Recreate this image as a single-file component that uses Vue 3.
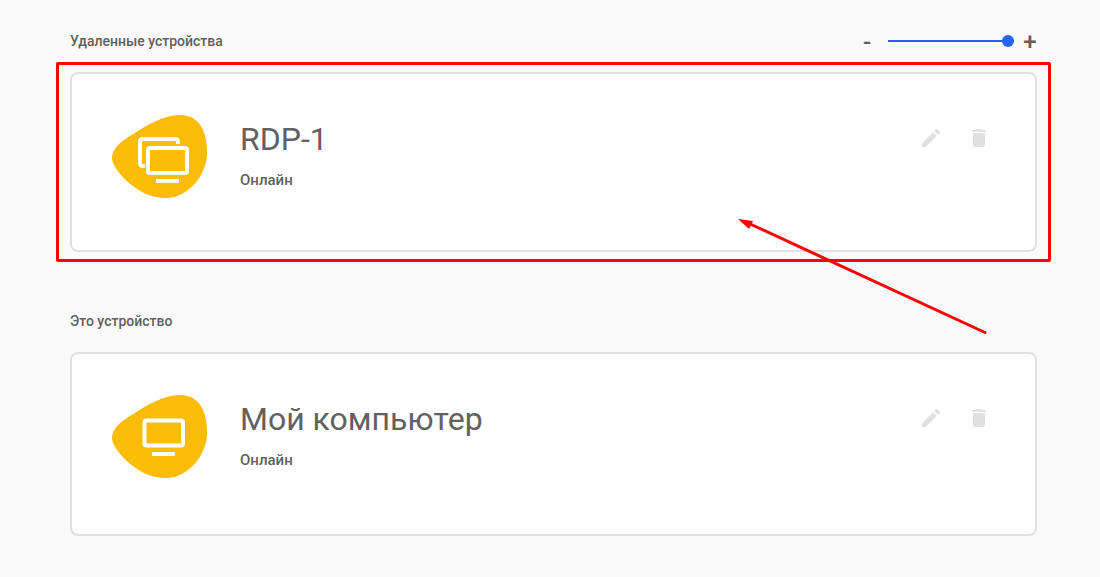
<script setup>
import { ref } from 'vue'

const zoom = ref(100)
const step = (delta) => {
  zoom.value = Math.min(100, Math.max(0, Number(zoom.value) + delta))
}

const sections = [
  { id: 'remote', title: 'Удаленные устройства', name: 'RDP-1', status: 'Онлайн', icon: 'multi', marked: true },
  { id: 'local', title: 'Это устройство', name: 'Мой компьютер', status: 'Онлайн', icon: 'single', marked: false },
]
</script>

<template>
  <main class="page">
    <section v-for="s in sections" :key="s.id" class="section" :aria-labelledby="s.id">
      <header class="head">
        <h2 :id="s.id" class="caption">{{ s.title }}</h2>
        <div v-if="s.marked" class="zoom">
          <button class="step" type="button" aria-label="Уменьшить" @click="step(-10)">-</button>
          <input v-model="zoom" class="range" type="range" min="0" max="100" aria-label="Масштаб" />
          <button class="step" type="button" aria-label="Увеличить" @click="step(10)">+</button>
        </div>
      </header>

      <article class="card" :class="{ tall: !s.marked }">
        <svg class="avatar" viewBox="0 0 96 84" aria-hidden="true">
          <path
            fill="#fbbc05"
            d="M0 43C0 35 6 29 15 23C30 13 50 0 68 0C86 0 95 14 95 38C95 60 76 83 54 83C38 83 26 76 16 67C6 58 0 49 0 43Z"
          />
          <g v-if="s.icon === 'multi'" fill="none" stroke="#fff" stroke-width="4">
            <path d="M33 51H31Q28 51 28 48V27Q28 24 31 24H63Q66 24 66 27V29" />
            <rect x="36" y="33" width="39" height="25" rx="2" />
            <path d="M44 66H67" />
          </g>
          <g v-else fill="none" stroke="#fff" stroke-width="4">
            <rect x="32.500" y="25.500" width="38.500" height="25" rx="2" />
            <path d="M40 59H63" />
          </g>
        </svg>
        <div class="info">
          <h3 class="name">{{ s.name }}</h3>
          <p class="status">{{ s.status }}</p>
        </div>
        <div class="actions">
          <button class="action" type="button" aria-label="Изменить">
            <svg viewBox="0 0 24 24" aria-hidden="true">
              <path d="M3 17.25V21h3.75L17.81 9.94l-3.75-3.75L3 17.25zM20.71 7.04a1 1 0 0 0 0-1.41l-2.34-2.34a1 1 0 0 0-1.41 0l-1.83 1.83 3.75 3.75 1.83-1.83z" />
            </svg>
          </button>
          <button class="action" type="button" aria-label="Удалить">
            <svg viewBox="0 0 24 24" aria-hidden="true">
              <path d="M6 19c0 1.1.9 2 2 2h8c1.1 0 2-.9 2-2V7H6v12zM19 4h-3.5l-1-1h-5l-1 1H5v2h14V4z" />
            </svg>
          </button>
        </div>
        <div v-if="s.marked" class="frame"></div>
        <svg v-if="s.marked" class="arrow" viewBox="0 0 250 118" aria-hidden="true">
          <path d="M10 5L247 114.500" stroke="#f00" stroke-width="3" stroke-linecap="round" />
          <path d="M0 1L15 3L11 11Z" fill="#f00" />
        </svg>
      </article>
    </section>
  </main>
</template>

<style>
body {
  margin: 0;
  background: #fafafa;
}
</style>

<style scoped>
.page {
  padding: 30px 63px 40px 70px;
  color: #616161;
  font-family: Roboto, "Liberation Sans", sans-serif;
}
.section + .section {
  margin-top: 58px;
}
.head {
  display: flex;
  align-items: center;
  justify-content: space-between;
  height: 22px;
}
.caption,
.status {
  margin: 0;
  font-size: 14px;
  line-height: 20px;
  font-weight: 500;
}
.zoom {
  display: flex;
  align-items: center;
}
.step {
  width: 14px;
  height: 22px;
  padding: 0;
  border: 0;
  background: none;
  color: inherit;
  font: 500 24px/24px Roboto, "Liberation Sans", sans-serif;
  cursor: pointer;
}
.range {
  appearance: none;
  width: 126px;
  height: 12px;
  margin: 0 9px 0 14px;
  background: linear-gradient(#2962ff, #2962ff) center / 100% 2px no-repeat;
}
.range::-webkit-slider-thumb {
  appearance: none;
  width: 12px;
  height: 12px;
  border: 0;
  border-radius: 50%;
  background: #2962ff;
}
.card {
  position: relative;
  display: flex;
  align-items: flex-start;
  box-sizing: border-box;
  min-height: 180px;
  margin-top: 20px;
  padding: 41px 44px 41px 40px;
  border: 2px solid #e0e0e0;
  border-radius: 8px;
  background: #fff;
}
.card.tall {
  min-height: 184px;
}
.avatar {
  flex: none;
  width: 96px;
  height: 84px;
}
.info {
  flex: 1;
  margin-left: 32px;
}
.name {
  margin: 4px 0 0;
  font-size: 32px;
  line-height: 40px;
  font-weight: 400;
}
.status {
  margin-top: 11px;
  font-size: 15px;
}
.actions {
  display: flex;
  gap: 24px;
  margin-top: 11px;
}
.action {
  width: 24px;
  height: 24px;
  padding: 0;
  border: 0;
  background: none;
  cursor: pointer;
}
.action svg {
  display: block;
  fill: #e0e0e0;
}
.frame {
  position: absolute;
  inset: -12px -16px;
  border: 3px solid #f00;
  border-radius: 2px;
  pointer-events: none;
}
.arrow {
  position: absolute;
  z-index: 1;
  top: 144px;
  right: 47px;
  width: 250px;
  height: 118px;
  pointer-events: none;
}
</style>
